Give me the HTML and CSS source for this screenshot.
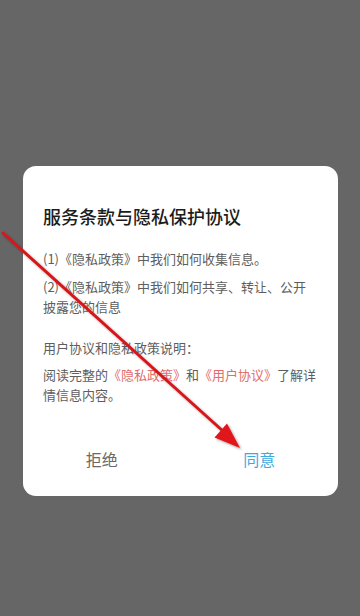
FILE: index.html
```html
<!DOCTYPE html>
<html lang="zh-CN">
<head>
<meta charset="utf-8">
<title>服务条款与隐私保护协议</title>
<link rel="stylesheet" href="styles.css">
</head>
<body>
<div class="screen">
  <div class="dialog">
    <h1 class="title">服务条款与隐私保护协议</h1>
    <p class="para p1">(1)《隐私政策》中我们如何收集信息。</p>
    <p class="para p2">(2)《隐私政策》中我们如何共享、转让、公开披露您的信息</p>
    <p class="para p3">用户协议和隐私政策说明：</p>
    <p class="para p4">阅读完整的<span class="link">《隐私政策》</span>和<span class="link">《用户协议》</span>了解详情信息内容。</p>
    <div class="actions">
      <button class="btn reject">拒绝</button>
      <button class="btn agree">同意</button>
    </div>
  </div>
  <svg class="arrow" width="360" height="616" viewBox="0 0 360 616">
    <defs>
      <filter id="sh" x="-10%" y="-10%" width="130%" height="130%">
        <feDropShadow dx="1.5" dy="1.5" stdDeviation="1.2" flood-color="#000" flood-opacity="0.35"/>
      </filter>
    </defs>
    <g filter="url(#sh)">
      <line x1="3" y1="233" x2="224" y2="432" stroke="#d7191c" stroke-width="3" stroke-linecap="round"/>
      <polygon points="240,448 214.5,437.5 227,423.5" fill="#e0161a"/>
    </g>
  </svg>
</div>
</body>
</html>
```

FILE: styles.css
```css
* { box-sizing: border-box; }
html, body {
  margin: 0;
  padding: 0;
  background: #666666;
}
.screen {
  position: relative;
  width: 360px;
  height: 616px;
  padding-top: 166px;
  font-family: "Noto Sans CJK SC", "Noto Sans", sans-serif;
}
.dialog {
  width: 315px;
  margin-left: 23px;
  background: #ffffff;
  border-radius: 13px;
  padding: 36px 20px 12px 20px;
}
.title {
  margin: 0;
  font-size: 18px;
  line-height: 28px;
  font-weight: 500;
  color: #1c1c1c;
}
.para {
  margin: 0;
  font-size: 13px;
  line-height: 20px;
  color: #5e5e5e;
}
.p1 { margin-top: 19px; }
.p2 { margin-top: 8px; }
.p3 { margin-top: 21px; }
.p4 { margin-top: 7px; }
.link { color: #e36c6c; }
.actions {
  display: flex;
  margin: 29px -20px 0 -20px;
}
.btn {
  flex: 1;
  height: 50px;
  border: none;
  background: transparent;
  font-family: "Noto Sans CJK SC", "Noto Sans", sans-serif;
  font-size: 16px;
  padding: 0;
}
.reject { color: #6a6a6a; }
.agree { color: #3fa9e2; }
.arrow {
  position: absolute;
  left: 0;
  top: 0;
  pointer-events: none;
}
```
